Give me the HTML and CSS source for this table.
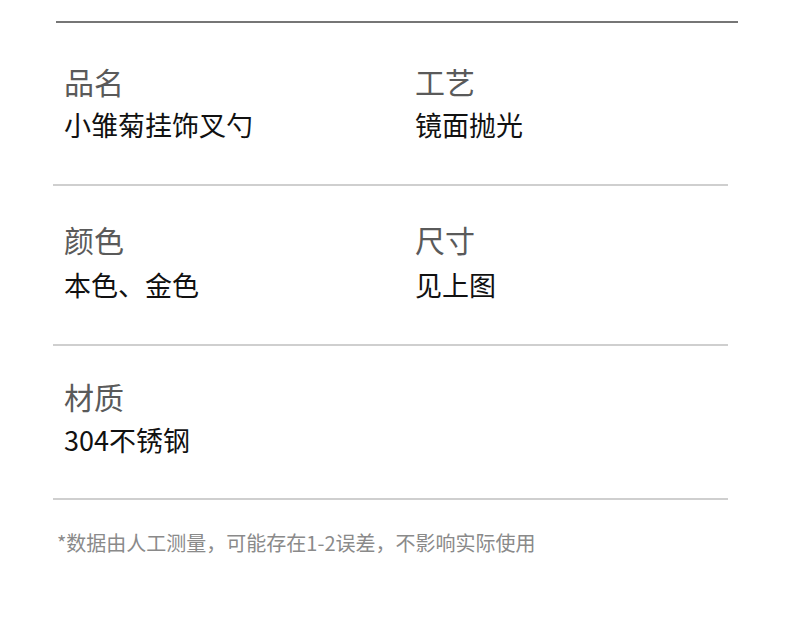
FILE: index.html
```html
<!DOCTYPE html>
<html lang="zh-CN">
<head>
<meta charset="utf-8">
<link rel="stylesheet" href="styles.css">
</head>
<body>
<div class="page">
  <div class="top-rule"></div>
  <div class="specs">
    <div class="row row-1">
      <div class="cell">
        <div class="label">品名</div>
        <div class="value">小雏菊挂饰叉勺</div>
      </div>
      <div class="cell">
        <div class="label">工艺</div>
        <div class="value">镜面抛光</div>
      </div>
    </div>
    <div class="row row-2">
      <div class="cell">
        <div class="label">颜色</div>
        <div class="value">本色、金色</div>
      </div>
      <div class="cell">
        <div class="label">尺寸</div>
        <div class="value">见上图</div>
      </div>
    </div>
    <div class="row row-3">
      <div class="cell">
        <div class="label">材质</div>
        <div class="value">304不锈钢</div>
      </div>
      <div class="cell"></div>
    </div>
  </div>
  <p class="note">*数据由人工测量，可能存在1-2误差，不影响实际使用</p>
</div>
</body>
</html>
```

FILE: styles.css
```css
html, body {
  margin: 0;
  padding: 0;
  background: #ffffff;
}

.page {
  width: 790px;
  height: 636px;
  padding-top: 21px;
  box-sizing: border-box;
  font-family: "Noto Sans CJK SC", "Noto Sans", sans-serif;
}

.top-rule {
  margin-left: 56px;
  width: 682px;
  height: 2px;
  background: #767676;
}

.specs {
  margin-left: 53px;
  width: 675px;
}

.row {
  display: grid;
  grid-template-columns: 351px 1fr;
  padding-left: 11px;
  box-sizing: border-box;
  border-bottom: 2px solid #cfcfcf;
}

.row-1 { height: 163px; padding-top: 39px; }
.row-2 { height: 160px; padding-top: 34px; }
.row-3 { height: 154px; padding-top: 31px; }

.row-2 .value { margin-top: 10px; }

.cell {
  display: flex;
  flex-direction: column;
}

.label {
  font-size: 30px;
  line-height: 38px;
  color: #5a5a5a;
}

.value {
  margin-top: 8px;
  font-size: 27px;
  line-height: 34px;
  color: #111111;
}

.note {
  margin: 30px 0 0 57px;
  font-size: 20px;
  line-height: 26px;
  color: #8a8a8a;
}
```
